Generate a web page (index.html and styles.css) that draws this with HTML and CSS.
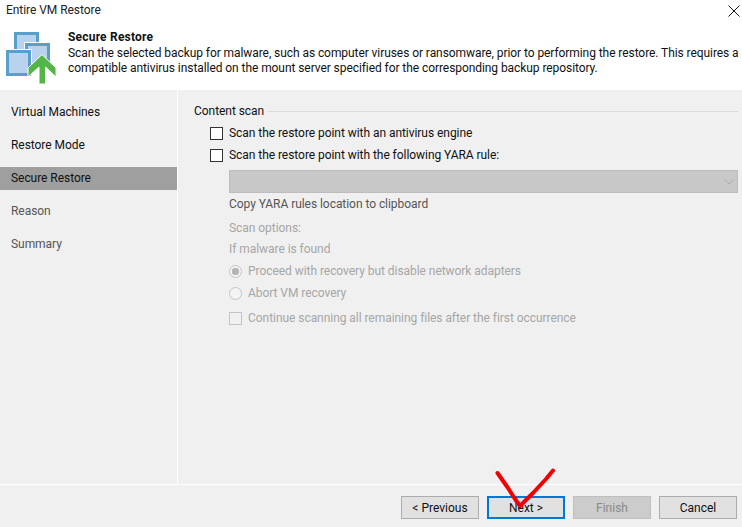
FILE: index.html
```html
<!DOCTYPE html>
<html lang="en">
<head>
<meta charset="utf-8">
<title>Entire VM Restore</title>
<link rel="stylesheet" href="styles.css">
</head>
<body>
<div class="window">
  <header class="head">
    <div class="titlebar">
      <span class="title">Entire VM Restore</span>
      <svg class="close" width="12" height="12" viewBox="0 0 12 12"><path d="M.5.5l11 11M11.500.5l-11 11" stroke="#111" fill="none"/></svg>
    </div>
    <div class="banner">
      <svg class="logo" width="52" height="54" viewBox="0 0 52 54">
        <rect x="9.500" y="3.500" width="22" height="22" fill="#b9d2ee" stroke="#5a9fca" stroke-width="3"/>
        <rect x="18" y="12" width="28" height="26" fill="#fff"/>
        <rect x="20.500" y="14.500" width="22" height="22" fill="#b9d2ee" stroke="#5a9fca" stroke-width="3"/>
        <rect x="0" y="19" width="26" height="28" fill="#fff"/>
        <rect x="1.500" y="21.500" width="22" height="23" fill="#b9d2ee" stroke="#5a9fca" stroke-width="3"/>
        <path d="M36 24.500 L50 38 V47 L39.500 37 V54 H33 V37 L22 47 V38 Z" fill="#53b548" stroke="#fff" stroke-width="1"/>
      </svg>
      <div class="intro">
        <div class="intro-title">Secure Restore</div>
        <p class="intro-text">Scan the selected backup for malware, such as computer viruses or ransomware, prior to performing the restore. This requires a compatible antivirus installed on the mount server specified for the corresponding backup repository.</p>
      </div>
    </div>
  </header>
  <div class="main">
    <nav class="steps">
      <div class="step">Virtual Machines</div>
      <div class="step">Restore Mode</div>
      <div class="step current">Secure Restore</div>
      <div class="step later">Reason</div>
      <div class="step later">Summary</div>
    </nav>
    <section class="content">
      <div class="group-head"><span>Content scan</span><i class="rule"></i></div>
      <div class="options">
        <label class="row row-first"><span class="box"></span>Scan the restore point with an antivirus engine</label>
        <label class="row row-second"><span class="box"></span>Scan the restore point with the following YARA rule:</label>
        <div class="indent">
          <div class="select">
            <svg width="10" height="6" viewBox="0 0 10 6"><path d="M.5.500 5 5 9.500.5" fill="none" stroke="#a9a9a9"/></svg>
          </div>
          <div class="copy">Copy YARA rules location to clipboard</div>
          <div class="faint scan-options">Scan options:</div>
          <div class="faint found">If malware is found</div>
          <div class="faint radio-row first-radio"><span class="radio on"></span>Proceed with recovery but disable network adapters</div>
          <div class="faint radio-row"><span class="radio"></span>Abort VM recovery</div>
          <div class="faint radio-row continue"><span class="box off"></span>Continue scanning all remaining files after the first occurrence</div>
        </div>
      </div>
    </section>
  </div>
  <footer class="foot">
    <button class="btn">&lt; Previous</button>
    <button class="btn focus">Next &gt;</button>
    <button class="btn off">Finish</button>
    <button class="btn cancel">Cancel</button>
  </footer>
</div>
<svg class="mark" width="742" height="527" viewBox="0 0 742 527"><path d="M497.500 473 L508 488 L515 499 L520 506 L533 493 L546 479 L553 470.500" fill="none" stroke="#f00000" stroke-width="4" stroke-linecap="round" stroke-linejoin="round"/></svg>
</body>
</html>
```
FILE: styles.css
```css
* { box-sizing: border-box; }
html, body { margin: 0; padding: 0; }
body {
  width: 742px;
  height: 527px;
  overflow: hidden;
  position: relative;
  font: 12px/16px Roboto, sans-serif;
  letter-spacing: -0.05px;
  color: #111;
  background: #f0f0f0;
}
.window { display: flex; flex-direction: column; height: 527px; }
.head { height: 90px; background: #fff; flex: none; }
.titlebar { display: flex; justify-content: space-between; padding: 2px 2px 0 6px; height: 28px; }
.title { color: #222; }
.close { margin: 3px 0 0 0; }
.banner { display: flex; padding-left: 6px; margin-top: 2px; }
.logo { flex: none; }
.intro { margin-left: 10px; margin-top: -1px; }
.intro-title { font-weight: 700; letter-spacing: 0.2px; }
.intro-text { margin: 1px 0 0; line-height: 15px; letter-spacing: -0.07px; }
.main { flex: 1; display: flex; min-height: 0; border-bottom: 1px solid #fff; }
.steps { width: 178px; flex: none; border-right: 1px solid #fff; padding-top: 11px; }
.step { height: 23px; margin-bottom: 10px; padding: 3px 11px; }
.step.current { background: #9f9f9f; }
.step.later { color: #555; }
.content { flex: 1; padding: 13px 4px 0 16px; }
.group-head { display: flex; align-items: center; gap: 4px; }
.rule { flex: 1; height: 1px; background: #dcdcdc; }
.options { padding-left: 16px; }
.row { display: flex; align-items: center; height: 16px; }
.row-first { margin-top: 6px; }
.row-second { margin-top: 6px; }
.box { width: 13px; height: 13px; border: 1px solid #333; background: #fff; margin-right: 6px; flex: none; }
.box.off { border-color: #c4c4c4; background: #f0f0f0; }
.indent { padding-left: 19px; }
.select { height: 23px; margin-top: 7px; background: #c8c8c8; border: 1px solid #bdbdbd; display: flex; align-items: center; justify-content: flex-end; padding-right: 3px; }
.copy { color: #555; margin-top: 3px; }
.faint { color: #a6a6a6; }
.scan-options { margin-top: 8px; }
.found { margin-top: 5px; }
.radio-row { display: flex; align-items: center; height: 16px; }
.first-radio { margin-top: 6px; }
.radio-row + .radio-row { margin-top: 6px; }
.radio-row.continue { margin-top: 9px; }
.radio { width: 13px; height: 13px; border-radius: 50%; border: 1px solid #c4c4c4; background: #f4f4f4; margin-right: 6px; flex: none; }
.radio.on { background: radial-gradient(circle, #b5b5b5 0 3.500px, #f4f4f4 4px); }
.foot { height: 42px; flex: none; display: flex; padding: 11px 5px 0 401px; gap: 8px; }
.btn { width: 78px; height: 23px; padding: 0; font: inherit; color: #111; background: #e1e1e1; border: 1px solid #adadad; }
.btn.focus { border: 2px solid #0078d7; }
.btn.off { background: #ccc; border-color: #bfbfbf; color: #8a8a8a; }
.mark { position: absolute; left: 0; top: 0; pointer-events: none; }
```
